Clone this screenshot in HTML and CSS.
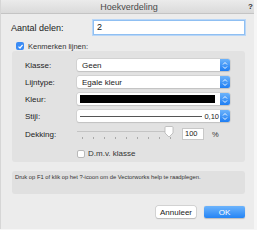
FILE: index.html
```html
<!DOCTYPE html>
<html>
<head>
<meta charset="utf-8">
<link rel="stylesheet" href="styles.css">
</head>
<body>
<div class="window">
  <div class="titlebar">
    <span></span>
    <span class="title">Hoekverdeling</span>
    <span class="help">?</span>
  </div>
  <div class="content">
    <div class="row-count">
      <span class="lbl-big">Aantal delen:</span>
      <div class="textfield">2</div>
    </div>
    <div class="check-row">
      <span class="cb checked"><svg width="7" height="7" viewBox="0 0 7 7"><path d="M1.5 3.6 L3 5 L5.6 1.8" fill="none" stroke="#fff" stroke-width="1.2"/></svg></span>
      <span class="lbl-small">Kenmerken lijnen:</span>
    </div>
    <div class="panel">
      <div class="prow">
        <span class="lbl">Klasse:</span>
        <div class="popup"><span class="ptext">Geen</span><span class="step"><svg width="6" height="9" viewBox="0 0 6 9"><path d="M1 3.5 L3 1.5 L5 3.5 M1 5.5 L3 7.5 L5 5.5" fill="none" stroke="#fff" stroke-width="0.9"/></svg></span></div>
      </div>
      <div class="prow">
        <span class="lbl">Lijntype:</span>
        <div class="popup"><span class="ptext">Egale kleur</span><span class="step"><svg width="6" height="9" viewBox="0 0 6 9"><path d="M1 3.5 L3 1.5 L5 3.5 M1 5.5 L3 7.5 L5 5.5" fill="none" stroke="#fff" stroke-width="0.9"/></svg></span></div>
      </div>
      <div class="prow">
        <span class="lbl">Kleur:</span>
        <div class="popup"><span class="swatch"></span><span class="step"><svg width="6" height="9" viewBox="0 0 6 9"><path d="M1 3.5 L3 1.5 L5 3.5 M1 5.5 L3 7.5 L5 5.5" fill="none" stroke="#fff" stroke-width="0.9"/></svg></span></div>
      </div>
      <div class="prow">
        <span class="lbl">Stijl:</span>
        <div class="popup"><span class="line"></span><span class="val">0,10</span><span class="step"><svg width="6" height="9" viewBox="0 0 6 9"><path d="M1 3.5 L3 1.5 L5 3.5 M1 5.5 L3 7.5 L5 5.5" fill="none" stroke="#fff" stroke-width="0.9"/></svg></span></div>
      </div>
      <div class="prow dek">
        <span class="lbl">Dekking:</span>
        <div class="slider">
          <div class="track"></div>
          <div class="ticks"><i></i><i></i><i></i><i></i><i></i><i></i><i></i><i></i><i></i></div>
          <svg class="thumb" width="10" height="12" viewBox="0 0 10 12"><path d="M1 1.5 Q1 0.5 2 0.5 L8 0.5 Q9 0.5 9 1.5 L9 7 L5 11 L1 7 Z" fill="#fff" stroke="#b5b5b5" stroke-width="0.8"/></svg>
        </div>
        <div class="numfield">100</div>
        <span class="pct">%</span>
      </div>
      <div class="dmv">
        <span class="cb"></span>
        <span class="lbl-dmv">D.m.v. klasse</span>
      </div>
    </div>
    <div class="helpbox">Druk op F1 of klik op het ?-icoon om de Vectorworks help te raadplegen.</div>
    <div class="buttons">
      <div class="btn">Annuleer</div>
      <div class="btn ok">OK</div>
    </div>
  </div>
</div>
</body>
</html>
```

FILE: styles.css
```css
* { box-sizing: border-box; }
html, body { margin: 0; padding: 0; }
body {
  width: 257px;
  height: 230px;
  background: #f6f6f6;
  font-family: "Liberation Sans", Arial, sans-serif;
  overflow: hidden;
}
.window {
  width: 254px;
  height: 229px;
  background: #ececec;
  border-left: 1px solid #d6d6d6;
}
.titlebar {
  height: 14px;
  display: grid;
  grid-template-columns: 1fr auto 1fr;
  align-items: center;
  background: linear-gradient(#ebebeb, #dadada);
  border-bottom: 1px solid #c4c4c4;
}
.title {
  font-size: 9px;
  color: #4a4a4a;
  margin-left: 3px;
}
.help {
  justify-self: end;
  font-size: 8px;
  font-weight: bold;
  color: #333;
  margin-right: 1px;
}
.content {
  padding: 6px 9px 0 10px;
}
.row-count {
  display: flex;
  align-items: center;
  height: 15px;
}
.lbl-big {
  font-size: 9px;
  color: #222;
  width: 82px;
}
.textfield {
  flex: 1;
  height: 15px;
  background: #fff;
  border: 1px solid #8fbff2;
  box-shadow: 0 0 0 1px #b8d6f7;
  font-size: 9px;
  padding-left: 3px;
  line-height: 13px;
  color: #111;
}
.check-row {
  display: flex;
  align-items: center;
  margin-top: 7px;
  padding-left: 5px;
  height: 8px;
}
.cb {
  width: 7px;
  height: 7px;
  border-radius: 2px;
  background: #fff;
  border: 1px solid #b9b9b9;
  display: inline-flex;
}
.cb.checked {
  background: #3b8cf5;
  border: none;
  width: 8px;
  height: 8px;
  align-items: center;
  justify-content: center;
}
.lbl-small {
  font-size: 7.5px;
  color: #333;
  margin-left: 4px;
}
.panel {
  margin-top: 1px;
  margin-left: 1px;
  width: 233px;
  height: 111px;
  background: #e2e2e2;
  border-radius: 3px;
  padding: 8px 15px 0 13px;
}
.prow {
  display: flex;
  align-items: center;
  height: 12px;
  margin-bottom: 5px;
}
.lbl {
  width: 52px;
  font-size: 8px;
  color: #222;
}
.popup {
  flex: 1;
  height: 12px;
  display: flex;
  align-items: center;
  background: #fff;
  border-radius: 2px;
  box-shadow: 0 0 0 0.5px #c6c6c6, 0 0.5px 1px rgba(0,0,0,0.15);
  padding-left: 3px;
}
.ptext {
  flex: 1;
  font-size: 8px;
  color: #222;
  padding-left: 2px;
}
.step {
  width: 10px;
  height: 12px;
  background: linear-gradient(#6cb3fb, #1f7ef3);
  border-radius: 0 2px 2px 0;
  display: flex;
  align-items: center;
  justify-content: center;
}
.swatch {
  flex: 1;
  height: 8px;
  background: #000;
  margin-right: 5px;
}
.line {
  flex: 1;
  height: 1px;
  background: #555;
}
.val {
  font-size: 7.5px;
  color: #222;
  margin: 0 1px 0 2px;
}
.prow.dek {
  height: 14px;
  margin-top: 4px;
  margin-bottom: 0;
}
.slider {
  width: 96px;
  height: 14px;
  position: relative;
}
.track {
  position: absolute;
  left: 0;
  right: 4px;
  top: 4px;
  height: 1px;
  background: #c4c4c4;
}
.ticks {
  position: absolute;
  left: 5px;
  top: 10px;
  display: flex;
  gap: 10px;
}
.ticks i {
  display: block;
  width: 1px;
  height: 1.5px;
  background: #a8a8a8;
}
.thumb {
  position: absolute;
  left: 87px;
  top: -1px;
}
.numfield {
  margin-left: 9px;
  width: 22px;
  height: 12px;
  background: #fff;
  border: 1px solid #c8c8c8;
  font-size: 7.5px;
  line-height: 10px;
  padding-left: 2px;
  color: #222;
}
.pct {
  margin-left: 8px;
  font-size: 7.5px;
  color: #333;
}
.dmv {
  display: flex;
  align-items: center;
  margin-top: 8px;
  padding-left: 52px;
}
.dmv .cb {
  width: 8px;
  height: 8px;
}
.lbl-dmv {
  font-size: 8px;
  color: #333;
  margin-left: 3px;
}
.helpbox {
  margin-top: 9px;
  margin-left: 1px;
  width: 233px;
  height: 23px;
  background: #e0e0e0;
  border-radius: 3px;
  font-size: 5.8px;
  color: #333;
  padding: 3px 0 0 3px;
  white-space: nowrap;
}
.buttons {
  display: flex;
  justify-content: flex-end;
  gap: 8px;
  margin-top: 12px;
}
.btn {
  height: 12px;
  width: 40px;
  background: #fff;
  border-radius: 2px;
  box-shadow: 0 0 0 0.5px #bdbdbd, 0 0.5px 1px rgba(0,0,0,0.2);
  font-size: 8px;
  color: #222;
  display: flex;
  align-items: center;
  justify-content: center;
}
.btn.ok {
  width: 41px;
  background: linear-gradient(#6db4fc, #2484f5);
  color: #fff;
  box-shadow: 0 0.5px 1px rgba(0,0,0,0.2);
}
```
